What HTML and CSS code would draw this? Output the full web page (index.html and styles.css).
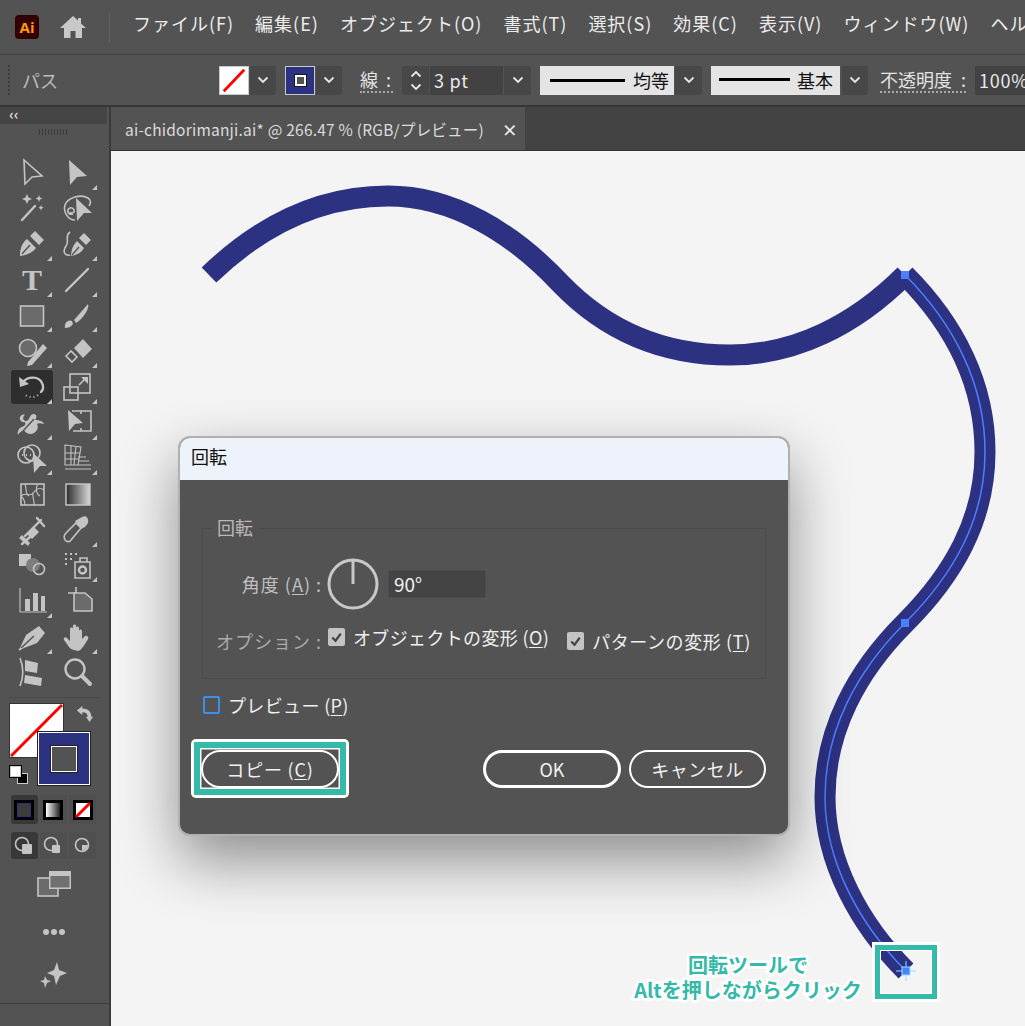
FILE: index.html
```html
<!DOCTYPE html>
<html lang="ja">
  <head>
    <meta charset="UTF-8">
    <title>回転ツール</title>
    <link rel="stylesheet" href="styles.css">
  </head>
  <body>
    <!-- Menu bar -->
    <div class="menubar">
      <div class="ai-logo">Ai</div>
      <svg class="home" viewBox="0 0 28 24"><path d="M14 1 1 13h4v10h6.500v-7h5v7H23V13h4l-5-4.600V3h-3v2.600z"/></svg>
      <div class="menu-sep"></div>
      <div class="menu-items">
        <span>ファイル(F)</span>
        <span>編集(E)</span>
        <span>オブジェクト(O)</span>
        <span>書式(T)</span>
        <span>選択(S)</span>
        <span>効果(C)</span>
        <span>表示(V)</span>
        <span>ウィンドウ(W)</span>
        <span>ヘルプ(H)</span>
      </div>
    </div>

    <!-- Control bar -->
    <div class="controlbar">
      <div class="ctl-grip"></div>
      <div class="ctl-name">パス</div>
      <div class="swatch swatch-fill">
        <svg viewBox="0 0 30 29"><line x1="4" y1="26" x2="26" y2="3" stroke="#f00" stroke-width="3"/></svg>
      </div>
      <div class="dd dd-1"><svg class="chev" viewBox="0 0 12 8"><path d="M1.500 1.500 6 6l4.500-4.500"/></svg></div>
      <div class="swatch swatch-stroke"><div class="swatch-hole"></div></div>
      <div class="dd dd-1"><svg class="chev" viewBox="0 0 12 8"><path d="M1.500 1.500 6 6l4.500-4.500"/></svg></div>
      <div class="ctl-label label-stroke">線 :</div>
      <div class="stepper">
        <svg class="chev" viewBox="0 0 12 8"><path d="M1.500 6.500 6 2l4.500 4.500"/></svg>
        <svg class="chev" viewBox="0 0 12 8"><path d="M1.500 1.500 6 6l4.500-4.500"/></svg>
      </div>
      <div class="ctl-input input-pt">3 pt</div>
      <div class="dd dd-1 dd-wide"><svg class="chev" viewBox="0 0 12 8"><path d="M1.500 1.500 6 6l4.500-4.500"/></svg></div>
      <div class="line-select select-a"><div class="line-sample"></div><span>均等</span></div>
      <div class="dd dd-1 dd-wide"><svg class="chev" viewBox="0 0 12 8"><path d="M1.500 1.500 6 6l4.500-4.500"/></svg></div>
      <div class="line-select select-b"><div class="line-sample"></div><span>基本</span></div>
      <div class="dd dd-2"><svg class="chev" viewBox="0 0 12 8"><path d="M1.500 1.500 6 6l4.500-4.500"/></svg></div>
      <div class="ctl-label label-opacity">不透明度 :</div>
      <div class="ctl-input input-opacity">100%</div>
    </div>

    <div class="main">
      <!-- Tools panel -->
      <div class="toolbar">
        <div class="collapse">‹‹</div>
        <div class="tool-grip"></div>
        <div class="tools">
          <div class="tool"><svg viewBox="0 0 32 32"><path class="o" d="M8 3 26 19 16 20 9 27z"/></svg></div>
          <div class="tool more"><svg viewBox="0 0 32 32"><path d="M8 3 26 19 16 20 9 28z"/></svg></div>

          <div class="tool"><svg viewBox="0 0 32 32"><path class="o thick" d="M6 27 19 13"/><path d="M11 1l1.500 3.500L16 6l-3.500 1.500L11 11 9.500 7.500 6 6l3.500-1.500zM23 2l1 2.500 2.500 1-2.500 1-1 2.500-1-2.500-2.500-1 2.500-1zM25 12l.800 2 2 .800-2 .800-.800 2-.800-2-2-.800 2-.800z"/></svg></div>
          <div class="tool"><svg viewBox="0 0 32 32"><path class="o" d="M14 27C7 27 2 19 4 12 7 4 20 1 27 5c3 2 3 5 1 8M12 21c-3 1-6-1-5-4 1-3 5-3 6 0s-3 4-4 2"/><path d="M15 5 31 20H23l-7 8z"/></svg></div>

          <div class="tool more"><svg viewBox="0 0 32 32"><path d="M4 28C4 20 6 15 11 11L20 20C16 25 11 27 4 28zM14 8 19 3 28 12 23 17z"/><path class="cut" d="M6 26 14 17"/></svg></div>
          <div class="tool more"><svg viewBox="0 0 32 32"><path d="M10 28C10 22 12 17 16 13L23 20C20 25 16 27 10 28zM18 10 23 5 30 12 25 17z"/><path class="cut" d="M11 27 18 19"/><path class="o" d="M9 4C3 8 9 13 5 18 1 24 4 28 9 27"/></svg></div>

          <div class="tool more"><span class="tool-t">T</span></div>
          <div class="tool more"><svg viewBox="0 0 32 32"><path class="o thick" d="M5 27 27 5"/></svg></div>

          <div class="tool more"><svg viewBox="0 0 32 32"><rect class="o grey" x="4.500" y="6" width="23" height="20"/></svg></div>
          <div class="tool more"><svg viewBox="0 0 32 32"><path d="M4 28C3 22 8 19 11 21L12 24C10 27 7 28 4 28zM13 20 27 4C29 8 22 19 15 23z"/></svg></div>

          <div class="tool more"><svg viewBox="0 0 32 32"><circle class="o grey" cx="12" cy="13" r="8.500"/><path d="M12 27 27 9l4 4-15 17-5 1z"/></svg></div>
          <div class="tool more"><svg viewBox="0 0 32 32"><path d="M13 13 22 4 31 14 22 23z"/><path class="o" d="M10 16 5 21l6 6 5-5z"/></svg></div>

          <div class="tool active more"><svg viewBox="0 0 32 32"><path class="o thick" d="M7 11C12 5 23 5 26 12c2 4 1 7-1 9"/><path d="M3 6 4 16 13 13z"/><path class="o dots" d="M22 24C18 27 13 27 8 23"/></svg></div>
          <div class="tool more"><svg viewBox="0 0 32 32"><rect class="o" x="9" y="3" width="20" height="19"/><rect class="o" x="3" y="16" width="14" height="13"/><path class="o" d="M18 14 25 7"/><path d="M20 6h7v7z"/></svg></div>

          <div class="tool more"><svg viewBox="0 0 32 32"><path d="M9 8c-3 2-2 6 1 6 4 0 3-7 8-7 3 0 3 4 1 6 4 0 8 1 9 4-3-1-6-1-7 0 2 3 0 9-6 10-4 0-6-2-7-4-3 1-5 3-6 5-1-4 1-7 4-8 3-1 4-3 3-5-3 1-6-2-5-5 1-2 3-3 5-2z"/><path class="cut" d="M7 24 18 12"/></svg></div>
          <div class="tool more"><svg viewBox="0 0 32 32"><path class="o" d="M11 4H30V24H12M30 4v20M20 4v3M20 21v3"/><path d="M7 3 22 16 14 17 8 24z"/></svg></div>

          <div class="tool more"><svg viewBox="0 0 32 32"><circle class="o" cx="10" cy="13" r="8"/><circle class="o" cx="16" cy="11" r="8"/><path class="o dots" d="M6 13H20"/><path d="M17 11 31 24H24l-6 7z"/></svg></div>
          <div class="tool more"><svg viewBox="0 0 32 32"><path class="o thin" d="M4 3 20 5 17 23H4zM4 11H19M4 17H18M10 4V23M15 4 13 23"/><path class="o thin" d="M17 15H25M17 19H28M17 23H30M4 27H30"/></svg></div>

          <div class="tool"><svg viewBox="0 0 32 32"><rect class="o" x="5" y="6" width="23" height="21"/><path class="o thin" d="M5 18C10 13 13 20 17 15S24 9 28 12M9 6C11 12 9 16 13 18M22 6C19 10 20 16 24 18M17 15C16 20 19 23 18 27M9 27C9 23 7 20 5 18"/></svg></div>
          <div class="tool"><svg viewBox="0 0 32 32"><defs><linearGradient id="grad"><stop offset="0" stop-color="#2b2b2b"/><stop offset="1" stop-color="#d8d8d8"/></linearGradient></defs><rect x="5" y="6" width="24" height="21" fill="url(#grad)" stroke="#c4c4c4" stroke-width="1.500"/></svg></div>

          <div class="tool"><svg viewBox="0 0 32 32"><path class="o thick" d="M6 30 14 23M21 4 28 12M9 22 25 6"/><path d="M3 24 12 32 14 29 6 21zM11 20 18 13 23 18 16 25z"/></svg></div>
          <div class="tool more"><svg viewBox="0 0 32 32"><path class="o" d="M5 27C2 24 3 21 5 19L15 9 20 14 10 26C9 28 7 28 5 27z"/><path d="M14 7 21 3C24 1 27 3 27 6 28 8 26 11 24 13L20 15z"/></svg></div>

          <div class="tool"><svg viewBox="0 0 32 32"><rect x="3" y="5" width="12" height="12"/><circle class="grey-fill" cx="17" cy="16" r="7"/><circle class="o" cx="23" cy="20" r="5.500"/></svg></div>
          <div class="tool more"><svg viewBox="0 0 32 32"><path d="M4 4h2v2H4zM9 4h2v2H9zM14 4h2v2h-2zM4 9h2v2H4zM9 9h2v2H9zM4 14h2v2H4z"/><path class="o" d="M14 13H29V29H14zM19 13V9h7v4"/><circle class="o thick" cx="21.500" cy="21" r="3.500"/></svg></div>

          <div class="tool more"><svg viewBox="0 0 32 32"><path class="o thin" d="M4 3V27H31"/><path d="M9 14h5v12H9zM17 8h5v18h-5zM25 11h4v15h-4z"/></svg></div>
          <div class="tool"><svg viewBox="0 0 32 32"><path class="o" d="M15 2V10M7 8H15"/><path class="o grey" d="M13 8H24L31 14V26H13z"/></svg></div>

          <div class="tool more"><svg viewBox="0 0 32 32"><path class="o" d="M3 29 17 19"/><path d="M3 29 10 14 23 5 29 12 21 22z"/><path class="cut" d="M5 27 18 15"/></svg></div>
          <div class="tool more"><svg viewBox="0 0 32 32"><path d="M13 29C8 28 7 24 3 19c-1-2 1-4 3-2l3 3V8c0-2 3-2 3 0V5c0-2 3-2 3 0v2c0-2 3-2 3 0v3c0-2 3-2 3 0v8l3-3c2-1 4 1 3 3-3 5-6 11-10 12z"/></svg></div>

          <div class="tool"><svg viewBox="0 0 32 32"><path class="o" d="M4 2C8 12 8 20 4 30"/><path d="M9 4 22 7 21 17 9 15zM9 19 26 22 25 30 8 27z"/></svg></div>
          <div class="tool"><svg viewBox="0 0 32 32"><circle class="o thick" cx="14" cy="13" r="9.500"/><path class="o wide" d="M21 20 29 28"/></svg></div>
        </div>

        <div class="tool-rule"></div>

        <div class="color-well">
          <div class="well-fill">
            <svg viewBox="0 0 53 53"><line x1="1" y1="52" x2="52" y2="1" stroke="#f00" stroke-width="3"/></svg>
          </div>
          <div class="well-stroke"><div class="well-hole"></div></div>
          <svg class="well-swap" viewBox="0 0 20 20"><path d="M1 6 7 1v3c6 0 10 3 10 9h2l-4 6-4-6h2c0-3-2-5-6-5v3z"/></svg>
          <div class="well-default"><i></i><b></b></div>
        </div>

        <div class="mode-row">
          <div class="mode-cell on"><span class="mode-color"></span></div>
          <div class="mode-cell"><span class="mode-gradient"></span></div>
          <div class="mode-cell">
            <svg class="mode-none" viewBox="0 0 20 20"><rect x="1.500" y="1.500" width="17" height="17" fill="#fff" stroke="#000" stroke-width="3"/><line x1="3" y1="17" x2="17" y2="3" stroke="#f00" stroke-width="3"/></svg>
          </div>
        </div>

        <div class="mode-row draw-row">
          <div class="mode-cell on"><svg viewBox="0 0 20 20"><circle class="o" cx="8" cy="8" r="6.500"/><rect x="8" y="8" width="10" height="10" rx="1"/></svg></div>
          <div class="mode-cell"><svg viewBox="0 0 20 20"><circle class="o" cx="8" cy="8" r="6.500"/><rect x="9" y="9" width="8" height="8" rx="1"/></svg></div>
          <div class="mode-cell"><svg viewBox="0 0 20 20"><circle class="o" cx="9" cy="9" r="6.500"/><path d="M9 9h6a6.500 6.500 0 0 1-6 6z"/></svg></div>
        </div>

        <svg class="screen-mode" viewBox="0 0 34 26"><rect class="o grey" x="1" y="7" width="20" height="18"/><rect x="12" y="0" width="22" height="18" fill="#c4c4c4"/><rect x="13.500" y="5" width="19" height="11.500" fill="#707070"/></svg>
        <div class="more-dots"><i></i><i></i><i></i></div>
        <svg class="sparkle" viewBox="0 0 28 28"><path d="M17 1 19 9 27 12 20 15 16 24 14 15 7 12 14 9zM5 15 7 19 11 20 7 22 5 27 4 22 0 20 4 19z"/></svg>
        <div class="tool-rule bottom-rule"></div>
      </div>

      <div class="work">
        <div class="tabbar">
          <div class="tab">
            <span>ai-chidorimanji.ai* @ 266.47 % (RGB/プレビュー)</span>
            <b class="tab-close">×</b>
          </div>
        </div>

        <div class="canvas">
          <!-- coordinates are page pixels -->
          <svg class="artwork" viewBox="111 151 914 875">
            <path class="stroke-wide" d="M209 275C264 222 325 196 388 196C452 196 512 232 560 283C607 332 665 355 730 355C795 355 855 325 905 275"/>
            <path class="stroke-wide" d="M905 275C955 325 985 385 985 452C985 520 953 575 905 623C857 671 825 730 825 797C825 862 860 925 906 971"/>
            <path class="stroke-guide" d="M905 275C955 325 985 385 985 452C985 520 953 575 905 623C857 671 825 730 825 797C825 862 860 925 906 971"/>
            <rect class="anchor" x="901" y="271" width="8" height="8"/>
            <rect class="anchor" x="901" y="619" width="8" height="8"/>
          </svg>

          <div class="dialog">
            <div class="dialog-title">回転</div>
            <div class="dialog-body">
              <div class="group">
                <div class="group-title">回転</div>
                <div class="field-row">
                  <div class="field-label">角度 (<u>A</u>) :</div>
                  <svg class="dial" viewBox="0 0 52 52"><circle cx="26" cy="26" r="24"/><line x1="26" y1="3" x2="26" y2="26"/></svg>
                  <div class="angle-input">90°</div>
                </div>
                <div class="field-row options-row">
                  <div class="field-label dim">オプション :</div>
                  <div class="check-item check-raised"><span class="check"><svg viewBox="0 0 18 18"><path d="M4.500 9.500 8 13l5.500-7.500"/></svg></span>オブジェクトの変形 (<u>O</u>)</div>
                  <div class="check-item check-second"><span class="check"><svg viewBox="0 0 18 18"><path d="M4.500 9.500 8 13l5.500-7.500"/></svg></span>パターンの変形 (<u>T</u>)</div>
                </div>
              </div>

              <div class="check-item preview-row"><span class="check-empty"></span>プレビュー (<u>P</u>)</div>

              <div class="button-row">
                <div class="copy-mark"><div class="btn btn-copy">コピー (<u>C</u>)</div></div>
                <div class="button-right">
                  <div class="btn btn-ok">OK</div>
                  <div class="btn btn-cancel">キャンセル</div>
                </div>
              </div>
            </div>
          </div>

          <div class="note">回転ツールで<br>Altを押しながらクリック</div>
          <div class="note-box"></div>
          <svg class="note-anchor" viewBox="0 0 20 20">
            <path d="M10 0V20M0 10H20" stroke="#7fe8ff" stroke-width="1"/>
            <rect x="6" y="6" width="8" height="8" fill="#4a80ff" stroke="#9fdcff"/>
          </svg>
        </div>
      </div>
    </div>
  </body>
</html>
```

FILE: styles.css
```css
* {
  box-sizing: border-box;
}

html,
body {
  margin: 0;
  height: 1026px;
  overflow: hidden;
}

body {
  background-color: #535353;
  color: #e8e8e8;
  font-family: "Noto Sans CJK JP", "Noto Sans", sans-serif;
  font-size: 18px;
}

u {
  text-underline-offset: 2px;
}

/* Menu bar */
.menubar {
  display: flex;
  align-items: center;
  height: 55px;
  padding-left: 15px;
  border-bottom: 1px solid #404040;
  white-space: nowrap;
}

.ai-logo {
  width: 24px;
  height: 24px;
  flex-shrink: 0;
  border-radius: 4px;
  background-color: #330000;
  color: #ff9a00;
  font-family: "Open Sans", sans-serif;
  font-size: 15px;
  font-weight: bold;
  line-height: 24px;
  text-align: center;
}

.home {
  width: 28px;
  height: 24px;
  margin-left: 20px;
  flex-shrink: 0;
  fill: #c8c8c8;
}

.menu-sep {
  width: 1px;
  height: 30px;
  margin-left: 22px;
  flex-shrink: 0;
  background-color: #626262;
}

.menu-items {
  display: flex;
  gap: 21px;
  margin-left: 23px;
  margin-top: -8px;
  letter-spacing: 1px;
  line-height: 24px;
  color: #ececec;
}

/* Control bar */
.controlbar {
  display: flex;
  align-items: center;
  height: 52px;
  border-bottom: 2px solid #363636;
  white-space: nowrap;
}

.controlbar > * {
  flex-shrink: 0;
}

.ctl-grip {
  width: 2px;
  height: 30px;
  margin-left: 8px;
  border-left: 2px dotted #3c3c3c;
}

.ctl-name {
  width: 209px;
  padding-left: 12px;
  color: #bdbdbd;
}

.swatch {
  width: 30px;
  height: 29px;
  border: 1px solid #c8c8c8;
}

.swatch svg {
  display: block;
  width: 100%;
  height: 100%;
}

.swatch-fill {
  background-color: #fff;
}

.swatch-stroke {
  display: flex;
  align-items: center;
  justify-content: center;
  margin-left: 9px;
  background-color: #2c3182;
}

.swatch-hole {
  width: 11px;
  height: 11px;
  border: 2px solid #fff;
  outline: 1px solid #1a1a1a;
  background-color: #535353;
}

.dd {
  display: flex;
  align-items: center;
  justify-content: center;
  width: 26px;
  height: 29px;
  border-radius: 0 3px 3px 0;
  background-color: #474747;
}

.dd-1 {
  margin-left: 1px;
}

.dd-2 {
  margin-left: 2px;
}

.dd-wide {
  width: 27px;
}

.chev {
  width: 12px;
  height: 8px;
  fill: none;
  stroke: #e8e8e8;
  stroke-width: 1.8;
}

.ctl-label {
  color: #e4e4e4;
  line-height: 24px;
  border-bottom: 2px dotted #aaa;
}

.label-stroke {
  width: 33px;
  margin-left: 18px;
  word-spacing: 4px;
}

.label-opacity {
  width: 86px;
  margin-left: 12px;
  word-spacing: 5px;
}

.stepper {
  display: flex;
  flex-direction: column;
  align-items: center;
  justify-content: center;
  gap: 5px;
  width: 27px;
  height: 29px;
  margin-left: 9px;
  border-radius: 3px 0 0 3px;
  background-color: #474747;
}

.ctl-input {
  height: 29px;
  padding-left: 4px;
  background-color: #424242;
  color: #e8e8e8;
  line-height: 28px;
  letter-spacing: 0.8px;
}

.input-pt {
  width: 73px;
  margin-left: 1px;
}

.input-opacity {
  width: 60px;
  margin-left: 9px;
}

.line-select {
  display: flex;
  align-items: center;
  height: 29px;
  margin-left: 9px;
  background-color: #e4e4e4;
  color: #111;
}

.line-sample {
  height: 3px;
  background-color: #000;
}

.select-a {
  width: 134px;
  padding-left: 10px;
}

.select-a .line-sample {
  width: 75px;
  margin-right: 8px;
}

.select-b {
  width: 129px;
  padding-left: 8px;
}

.select-b .line-sample {
  width: 71px;
  margin-right: 7px;
  margin-top: -2px;
}

/* Layout below the bars */
.main {
  display: flex;
  height: 919px;
}

/* Tools panel */
.toolbar {
  display: flex;
  flex-direction: column;
  align-items: center;
  width: 111px;
  flex-shrink: 0;
  padding-right: 2px;
  border-right: 2px solid #3b3b3b;
}

.collapse {
  width: 100%;
  height: 17px;
  padding-left: 9px;
  background-color: #454545;
  color: #d8d8d8;
  font-size: 15px;
  font-weight: bold;
  line-height: 13px;
  letter-spacing: 0;
}

.tool-grip {
  width: 30px;
  height: 6px;
  margin: 5px 0 20px;
  flex-shrink: 0;
  background-image: repeating-linear-gradient(90deg, #3a3a3a 0 1px, transparent 1px 3px);
}

.tools {
  display: grid;
  grid-template-columns: 45px 45px;
  grid-auto-rows: 35.7px;
  width: 90px;
  margin-right: -2px;
}

.tool {
  position: relative;
  display: flex;
  align-items: center;
  justify-content: center;
}

.tool svg {
  width: 32px;
  height: 32px;
}

.tool.more::after {
  content: "";
  position: absolute;
  right: 3px;
  bottom: 1px;
  border-style: solid;
  border-width: 0 0 5px 5px;
  border-color: transparent transparent #c4c4c4 transparent;
}

.tool.active::before {
  content: "";
  position: absolute;
  top: 1px;
  left: 1px;
  right: 2px;
  bottom: 1px;
  border-radius: 3px;
  background-color: #2e2e2e;
}

.tool.active svg {
  position: relative;
}

.toolbar svg {
  fill: #c4c4c4;
}

.toolbar .o {
  fill: none;
  stroke: #c4c4c4;
  stroke-width: 1.6;
}

.toolbar .o.thin {
  stroke-width: 1.1;
}

.toolbar .o.thick {
  stroke-width: 2.4;
  stroke-linecap: round;
}

.toolbar .o.wide {
  stroke-width: 4;
  stroke-linecap: round;
}

.toolbar .o.grey {
  fill: #6b6b6b;
}

.toolbar .o.dots {
  stroke-width: 2;
  stroke-dasharray: 1 3;
}

.toolbar .grey-fill {
  fill: #7d7d7d;
}

.toolbar .cut {
  fill: none;
  stroke: #535353;
  stroke-width: 1.4;
}

.tool-t {
  color: #c4c4c4;
  font-family: "Liberation Serif", serif;
  font-size: 30px;
  font-weight: bold;
  line-height: 34px;
}

.tool-rule {
  width: 92px;
  height: 1px;
  margin-top: 7px;
  flex-shrink: 0;
  background-color: #4a4a4a;
}

.color-well {
  position: relative;
  width: 90px;
  height: 82px;
  margin-top: 6px;
  margin-left: 2px;
  flex-shrink: 0;
}

.well-fill {
  position: absolute;
  top: 0;
  left: 0;
  width: 53px;
  height: 53px;
  background-color: #fff;
  outline: 1px solid #333;
}

.well-fill svg {
  display: block;
}

.well-stroke {
  position: absolute;
  top: 28px;
  left: 28px;
  display: flex;
  align-items: center;
  justify-content: center;
  width: 52px;
  height: 53px;
  border: 1px solid #fff;
  outline: 1px solid #222;
  background-color: #2c3182;
}

.well-hole {
  width: 26px;
  height: 26px;
  border: 1px solid #fff;
  outline: 1px solid #222;
  background-color: #535353;
}

.well-swap {
  position: absolute;
  top: 1px;
  left: 66px;
  width: 18px;
  height: 18px;
}

.well-default {
  position: absolute;
  top: 62px;
  left: 0;
  width: 18px;
  height: 18px;
}

.well-default i,
.well-default b {
  position: absolute;
  width: 11px;
  height: 11px;
  border: 1px solid #ccc;
}

.well-default b {
  right: 0;
  bottom: 0;
  background-color: #000;
}

.well-default i {
  top: 0;
  left: 0;
  z-index: 1;
  background-color: #fff;
  outline: 1px solid #000;
}

.mode-row {
  display: flex;
  gap: 2px;
  width: 86px;
  height: 29px;
  margin-top: 9px;
  flex-shrink: 0;
}

.mode-cell {
  display: flex;
  align-items: center;
  justify-content: center;
  width: 28px;
  background-color: #4f4f4f;
}

.mode-cell.on {
  border-radius: 3px;
  background-color: #383838;
}

.mode-cell svg {
  width: 20px;
  height: 20px;
}

.mode-color {
  width: 20px;
  height: 20px;
  border: 3px solid #000;
  outline: 1px solid #2c3182;
  outline-offset: -4px;
  background-color: #3c3c3c;
}

.mode-gradient {
  width: 20px;
  height: 20px;
  border: 3px solid #000;
  background-image: linear-gradient(90deg, #fff, #222);
}

.draw-row {
  height: 27px;
  margin-top: 8px;
}

.screen-mode {
  width: 34px;
  height: 26px;
  margin-top: 12px;
  flex-shrink: 0;
}

.more-dots {
  display: flex;
  gap: 2px;
  margin-top: 28px;
  height: 14px;
  align-items: center;
  flex-shrink: 0;
}

.more-dots i {
  width: 6px;
  height: 6px;
  border-radius: 50%;
  background-color: #c4c4c4;
}

.sparkle {
  width: 28px;
  height: 28px;
  margin-top: 22px;
  flex-shrink: 0;
}

.bottom-rule {
  width: 111px;
  margin-top: 14px;
  background-color: #3b3b3b;
}

/* Document area */
.work {
  display: flex;
  flex-direction: column;
  flex: 1;
  min-width: 0;
}

.tabbar {
  height: 44px;
  flex-shrink: 0;
  background-color: #434343;
  border-bottom: 1px solid #333;
}

.tab {
  display: flex;
  align-items: center;
  justify-content: space-between;
  width: 414px;
  height: 43px;
  padding: 0 7px 0 14px;
  background-color: #535353;
  color: #dcdcdc;
  font-size: 15.5px;
  letter-spacing: 0.22px;
  white-space: nowrap;
}

.tab-close {
  color: #eee;
  font-size: 16px;
}

.canvas {
  position: relative;
  flex: 1;
  overflow: hidden;
  background-color: #f4f4f4;
}

.artwork {
  position: absolute;
  top: 0;
  left: 0;
  width: 914px;
  height: 875px;
}

.stroke-wide {
  fill: none;
  stroke: #2c3182;
  stroke-width: 21;
}

.stroke-guide {
  fill: none;
  stroke: #4a80ff;
  stroke-width: 1.5;
}

.anchor {
  fill: #4a80ff;
}

/* Dialog */
.dialog {
  position: absolute;
  top: 285px;
  left: 67px;
  width: 612px;
  height: 400px;
  overflow: hidden;
  border: 2px solid #b0b0b0;
  border-radius: 12px;
  background-color: #535353;
  box-shadow: 0 25px 60px rgba(0, 0, 0, 0.42);
}

.dialog-title {
  height: 42px;
  padding-left: 11px;
  background-color: #eef3fb;
  color: #111;
  line-height: 36px;
}

.dialog-body {
  padding: 48px 22px 0;
}

.group {
  height: 151px;
  padding: 29px 0 0 0;
  border: 1px solid #4b4b4b;
  border-radius: 2px;
}

.group-title {
  position: absolute;
  top: 78px;
  left: 31px;
  padding: 0 6px;
  background-color: #535353;
  color: #b8b8b8;
  line-height: 22px;
}

.field-row {
  display: flex;
  align-items: center;
}

.field-label {
  width: 119px;
  text-align: right;
  color: #c0c0c0;
  letter-spacing: 1px;
  white-space: nowrap;
}

.dim {
  color: #aaa;
}

.dial {
  width: 52px;
  height: 52px;
  margin-left: 5px;
  fill: none;
  stroke: #c8c8c8;
  stroke-width: 3;
}

.angle-input {
  width: 98px;
  height: 28px;
  margin-left: 9px;
  padding-left: 5px;
  border: 1px solid #4b4b4b;
  border-radius: 2px;
  background-color: #444;
  color: #f0f0f0;
  font-size: 19px;
  line-height: 25px;
}

.options-row {
  align-items: flex-start;
  margin-top: 14px;
  white-space: nowrap;
}

.options-row .field-label {
  margin-top: 4px;
}

.check-item {
  display: flex;
  align-items: center;
  color: #f0f0f0;
  letter-spacing: 0.35px;
  white-space: pre;
}

.check {
  display: flex;
  width: 17px;
  height: 18px;
  margin-right: 8px;
  border-radius: 2px;
  background-color: #c4c4c4;
}

.check svg {
  width: 100%;
  height: 100%;
  fill: none;
  stroke: #444;
  stroke-width: 2.4;
}

.check-raised {
  margin-left: 6px;
}

.check-second {
  margin-left: 18px;
  margin-top: 4px;
  letter-spacing: 0.6px;
}

.check-empty {
  width: 17px;
  height: 18px;
  margin-right: 8px;
  border: 2px solid #3f8fe8;
  border-radius: 2px;
}

.preview-row {
  height: 22px;
  margin: 15px 0 0 1px;
}

.button-row {
  display: flex;
  align-items: center;
  justify-content: space-between;
  margin: 26px 0 0 -8px;
}

.copy-mark {
  width: 152px;
  height: 53px;
  padding: 2px 0 0 1px;
  border: 6px solid #35b9a9;
  border-radius: 2px;
  box-shadow: 0 0 0 3px #fff, inset 0 0 0 1.500px #fff;
}

.button-right {
  display: flex;
  gap: 8px;
}

.btn {
  width: 138px;
  height: 38px;
  border: 2px solid #fff;
  border-radius: 19px;
  color: #f0f0f0;
  line-height: 34px;
  text-align: center;
  white-space: pre;
}

.btn-copy {
  letter-spacing: 0.8px;
}

.btn-ok {
  border-width: 3px;
  line-height: 32px;
}

.btn-cancel {
  width: 137px;
  letter-spacing: 0.5px;
}

/* Note on the canvas */
.note {
  position: absolute;
  top: 801px;
  left: 487px;
  width: 300px;
  color: #35b9a9;
  font-size: 20px;
  font-weight: bold;
  line-height: 25px;
  text-align: center;
  -webkit-text-stroke: 5px #fff;
  paint-order: stroke fill;
}

.note-box {
  position: absolute;
  top: 794px;
  left: 764px;
  width: 62px;
  height: 54px;
  border: 5px solid #35b9a9;
  box-shadow: 0 0 0 3px #fff, inset 0 0 0 1px #fff;
}

.note-anchor {
  position: absolute;
  top: 810px;
  left: 785px;
  width: 20px;
  height: 20px;
}
```
